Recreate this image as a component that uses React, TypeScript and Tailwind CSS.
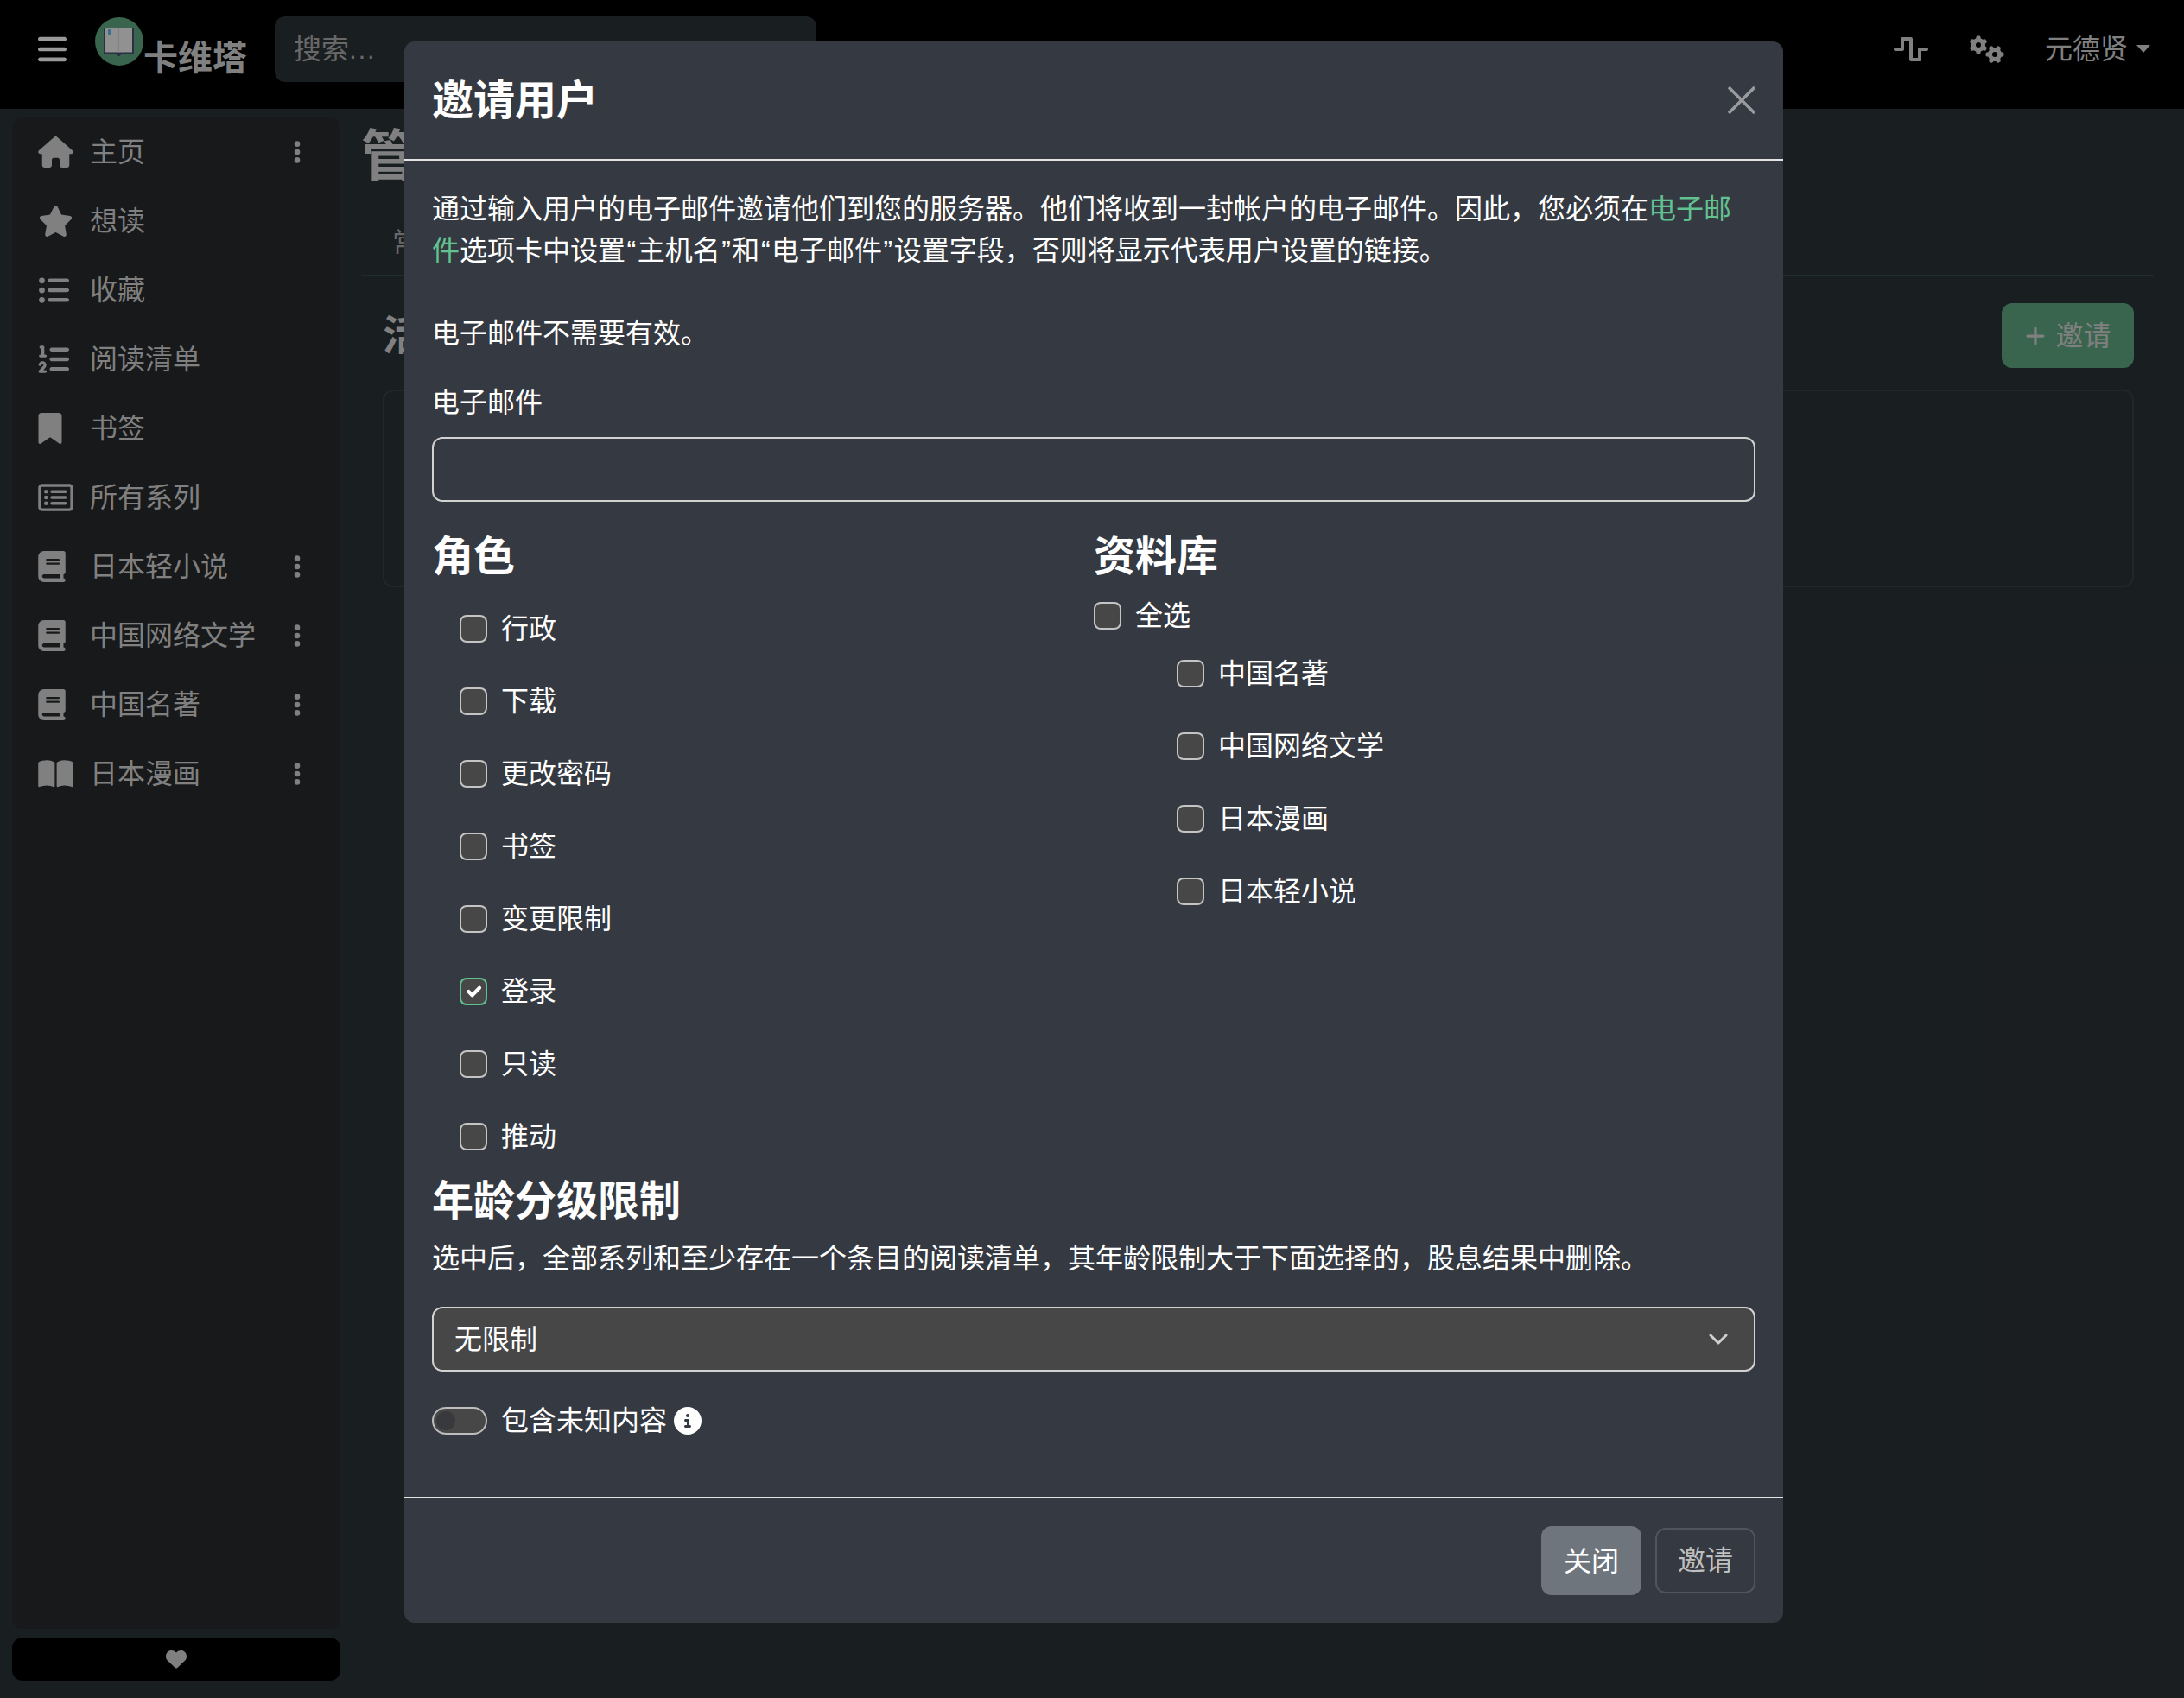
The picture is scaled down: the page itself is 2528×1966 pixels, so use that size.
import React from "react";
import {
  FaBars, FaHouse, FaStar, FaListUl, FaListOl, FaBookmark, FaRegRectangleList, FaBook, FaBookOpen,
  FaEllipsisVertical, FaHeart, FaWaveSquare, FaGears, FaPlus, FaCircleInfo,
} from "react-icons/fa6";

const FONT = "font-['Liberation_Sans','Noto_Sans_CJK_SC',sans-serif]";

const nav: { label: string; icon: React.ReactNode; dots?: boolean }[] = [
  { label: "主页", icon: <FaHouse className="w-[41px] h-[36px]" />, dots: true },
  { label: "想读", icon: <FaStar className="w-[41px] h-[36px]" /> },
  { label: "收藏", icon: <FaListUl className="w-[36px] h-[36px]" /> },
  { label: "阅读清单", icon: <FaListOl className="w-[36px] h-[36px]" /> },
  { label: "书签", icon: <FaBookmark className="w-[28px] h-[36px]" /> },
  { label: "所有系列", icon: <FaRegRectangleList className="w-[41px] h-[36px]" /> },
  { label: "日本轻小说", icon: <FaBook className="w-[32px] h-[36px]" />, dots: true },
  { label: "中国网络文学", icon: <FaBook className="w-[32px] h-[36px]" />, dots: true },
  { label: "中国名著", icon: <FaBook className="w-[32px] h-[36px]" />, dots: true },
  { label: "日本漫画", icon: <FaBookOpen className="w-[41px] h-[36px]" />, dots: true },
];

function Logo() {
  return (
    <svg viewBox="0 0 56 56" className="mt-[1px] h-[56px] w-[56px] shrink-0">
      <circle cx="28" cy="28" r="28" fill="#60a882" />
      <path d="M10 12h35v31H30.5l-3 2.5-3-2.5H10z" fill="#474f6d" />
      <rect x="12" y="12" width="31" height="28.5" fill="#f2f2f2" />
      <rect x="27" y="12" width="1" height="28.5" fill="#d8d8d8" />
      <rect x="15" y="13" width="4" height="7" fill="#66bbe6" />
    </svg>
  );
}

function Box({ checked }: { checked?: boolean }) {
  return (
    <span
      className={`flex h-[32px] w-[32px] shrink-0 items-center justify-center rounded-[8px] border-2 bg-[#474747] ${
        checked ? "border-[#62c191]" : "border-[#c4c4c4]"
      }`}
    >
      {checked && (
        <svg viewBox="0 0 20 20" className="h-[28px] w-[28px]" fill="none" stroke="#fff" strokeWidth="3" strokeLinecap="round" strokeLinejoin="round">
          <path d="M6 10l3 3 6-6" />
        </svg>
      )}
    </span>
  );
}

function Row({ label, checked }: { label: string; checked?: boolean }) {
  return (
    <div className="flex h-[84px] items-center gap-[16px]">
      <Box checked={checked} />
      <span>{label}</span>
    </div>
  );
}

function Q({ c }: { c: string }) {
  return <span className="mx-[1.5px]">{c}</span>;
}

export default function App() {
  return (
    <div className={`${FONT} relative h-[1966px] w-[2528px] overflow-hidden bg-[#2b3237] text-[32px] leading-[48px] text-[#d5d5d5]`}>
      <header className="flex h-[126px] items-center bg-black pb-[12px] pl-[44px] pr-[39px]">
        <FaBars className="h-[38px] w-[33px] text-white" />
        <div className="ml-[33px] flex h-[76px] items-start">
          <Logo />
          <span className="mt-[24px] text-[40px] font-bold leading-[48px]">卡维塔</span>
        </div>
        <div className="ml-[32px] flex h-[76px] w-[627px] items-center rounded-[12px] bg-[#2b3237] px-[22px] text-[#adadad]">
          搜索<span className="tracking-[1.5px]">...</span>
        </div>
        <div className="ml-auto flex items-center">
          <FaWaveSquare className="h-[32px] w-[40px]" />
          <FaGears className="ml-[48px] h-[36px] w-[40px]" />
          <span className="ml-[47px]">元德贤</span>
          <span className="mb-[2px] ml-[10px] h-0 w-0 border-x-[8px] border-t-[9px] border-x-transparent border-t-[#d5d5d5]" />
        </div>
      </header>

      <div className="flex h-[1840px]">
        <aside className="ml-[14px] flex w-[380px] shrink-0 flex-col pt-[10px]">
          <nav className="h-[1750px] rounded-[12px] bg-[#272a2d]">
            {nav.map((n) => (
              <div key={n.label} className="flex h-[80px] items-center pl-[30px] pr-[45px]">
                <span className="flex w-[60px] shrink-0">{n.icon}</span>
                <span className="flex-1">{n.label}</span>
                {n.dots && <FaEllipsisVertical className="h-[30px] w-[10px]" />}
              </div>
            ))}
          </nav>
          <div className="mt-[10px] flex h-[50px] items-center justify-center rounded-[12px] bg-black">
            <FaHeart className="h-[24px] w-[24px]" />
          </div>
        </aside>

        <main className="ml-[24px] w-[2075px]">
          <h1 className="mt-[20px] h-[70px] text-[64px] font-bold leading-[70px]">管理仪表板</h1>
          <div className="flex h-[104px] items-end border-b-2 border-[#355044] pb-[13px] pl-[36px] text-[#adadad]">
            <span>常规</span>
          </div>
          <div className="mt-[31px] flex h-[75px] items-center justify-between pl-[25px] pr-[23px]">
            <h2 className="text-[48px] font-bold leading-[58px]">活跃用户</h2>
            <div className="flex h-[75px] w-[153px] items-center justify-center gap-[10px] rounded-[12px] bg-[#60a882]">
              <FaPlus className="h-[26px] w-[26px]" />
              <span>邀请</span>
            </div>
          </div>
          <div className="ml-[25px] mr-[23px] mt-[25px] h-[229px] rounded-[12px] border-2 border-[#3c4044]" />
        </main>
      </div>

      {/* backdrop */}
      <div className="absolute inset-0 bg-black/40" />

      {/* modal */}
      <section className="absolute left-[468px] top-[48px] flex h-[1831px] w-[1596px] flex-col rounded-[12px] bg-[#353941] text-white">
        <div className="flex h-[138px] shrink-0 items-center justify-between border-b-2 border-[#e4e4e4] px-[32px]">
          <h3 className="pt-[2px] text-[48px] font-bold leading-[58px]">邀请用户</h3>
          <svg viewBox="0 0 32 32" className="h-[32px] w-[32px]" stroke="#999b9e" strokeWidth="3.6">
            <path d="M1 1l30 30M31 1L1 31" />
          </svg>
        </div>

        <div className="flex-1 px-[32px] pt-[32px]">
          <p>
            通过输入用户的电子邮件邀请他们到您的服务器。他们将收到一封帐户的电子邮件。因此，您必须在
            <span className="text-[#62c191]">电子邮件</span>
            选项卡中设置<Q c="“" />主机名<Q c="”" />和<Q c="“" />电子邮件<Q c="”" />设置字段，否则将显示代表用户设置的链接。
          </p>
          <p className="mt-[48px]">电子邮件不需要有效。</p>
          <label className="mt-[32px] block">电子邮件</label>
          <div className="mt-[16px] h-[75px] rounded-[12px] border-2 border-[#d2d2d2]" />

          <div className="mt-[35px] grid grid-cols-2">
            <div>
              <h4 className="text-[48px] font-bold leading-[58px]">角色</h4>
              <div className="mt-[12px] pl-[32px]">
                <Row label="行政" />
                <Row label="下载" />
                <Row label="更改密码" />
                <Row label="书签" />
                <Row label="变更限制" />
                <Row label="登录" checked />
                <Row label="只读" />
                <Row label="推动" />
              </div>
            </div>
            <div>
              <h4 className="text-[48px] font-bold leading-[58px]">资料库</h4>
              <div className="mt-[15px] flex h-[48px] items-center gap-[16px]">
                <Box />
                <span>全选</span>
              </div>
              <div className="pl-[96px] pt-[1px]">
                <Row label="中国名著" />
                <Row label="中国网络文学" />
                <Row label="日本漫画" />
                <Row label="日本轻小说" />
              </div>
            </div>
          </div>

          <h4 className="mt-[4px] text-[48px] font-bold leading-[58px]">年龄分级限制</h4>
          <p className="mt-[13px]">选中后，全部系列和至少存在一个条目的阅读清单，其年龄限制大于下面选择的，股息结果中删除。</p>
          <div className="mt-[32px] flex h-[75px] items-center justify-between rounded-[12px] border-2 border-[#d2d2d2] bg-[#474747] pl-[24px] pr-[30px]">
            <span>无限制</span>
            <svg viewBox="0 0 22 13" className="h-[13px] w-[22px]" fill="none" stroke="#d0d0d0" strokeWidth="3" strokeLinecap="round" strokeLinejoin="round">
              <path d="M2 2l9 9 9-9" />
            </svg>
          </div>
          <div className="mt-[41px] flex h-[32px] items-center">
            <span className="flex h-[32px] w-[64px] items-center rounded-full border-2 border-[#bdbdbd] bg-[#474747] pl-[3px]">
              <span className="h-[22px] w-[22px] rounded-full bg-[#37393c]" />
            </span>
            <span className="ml-[16px]">包含未知内容</span>
            <FaCircleInfo className="ml-[8px] h-[32px] w-[32px]" />
          </div>
        </div>

        <div className="flex h-[146px] shrink-0 items-center justify-end gap-[16px] border-t-2 border-[#e4e4e4] pr-[32px]">
          <button className="h-[80px] w-[116px] rounded-[12px] bg-[#6f757d] pt-[2px] text-white">关闭</button>
          <button className="h-[76px] w-[116px] rounded-[12px] border-2 border-[#50545c] text-[#bfbfbf]">邀请</button>
        </div>
      </section>
    </div>
  );
}
